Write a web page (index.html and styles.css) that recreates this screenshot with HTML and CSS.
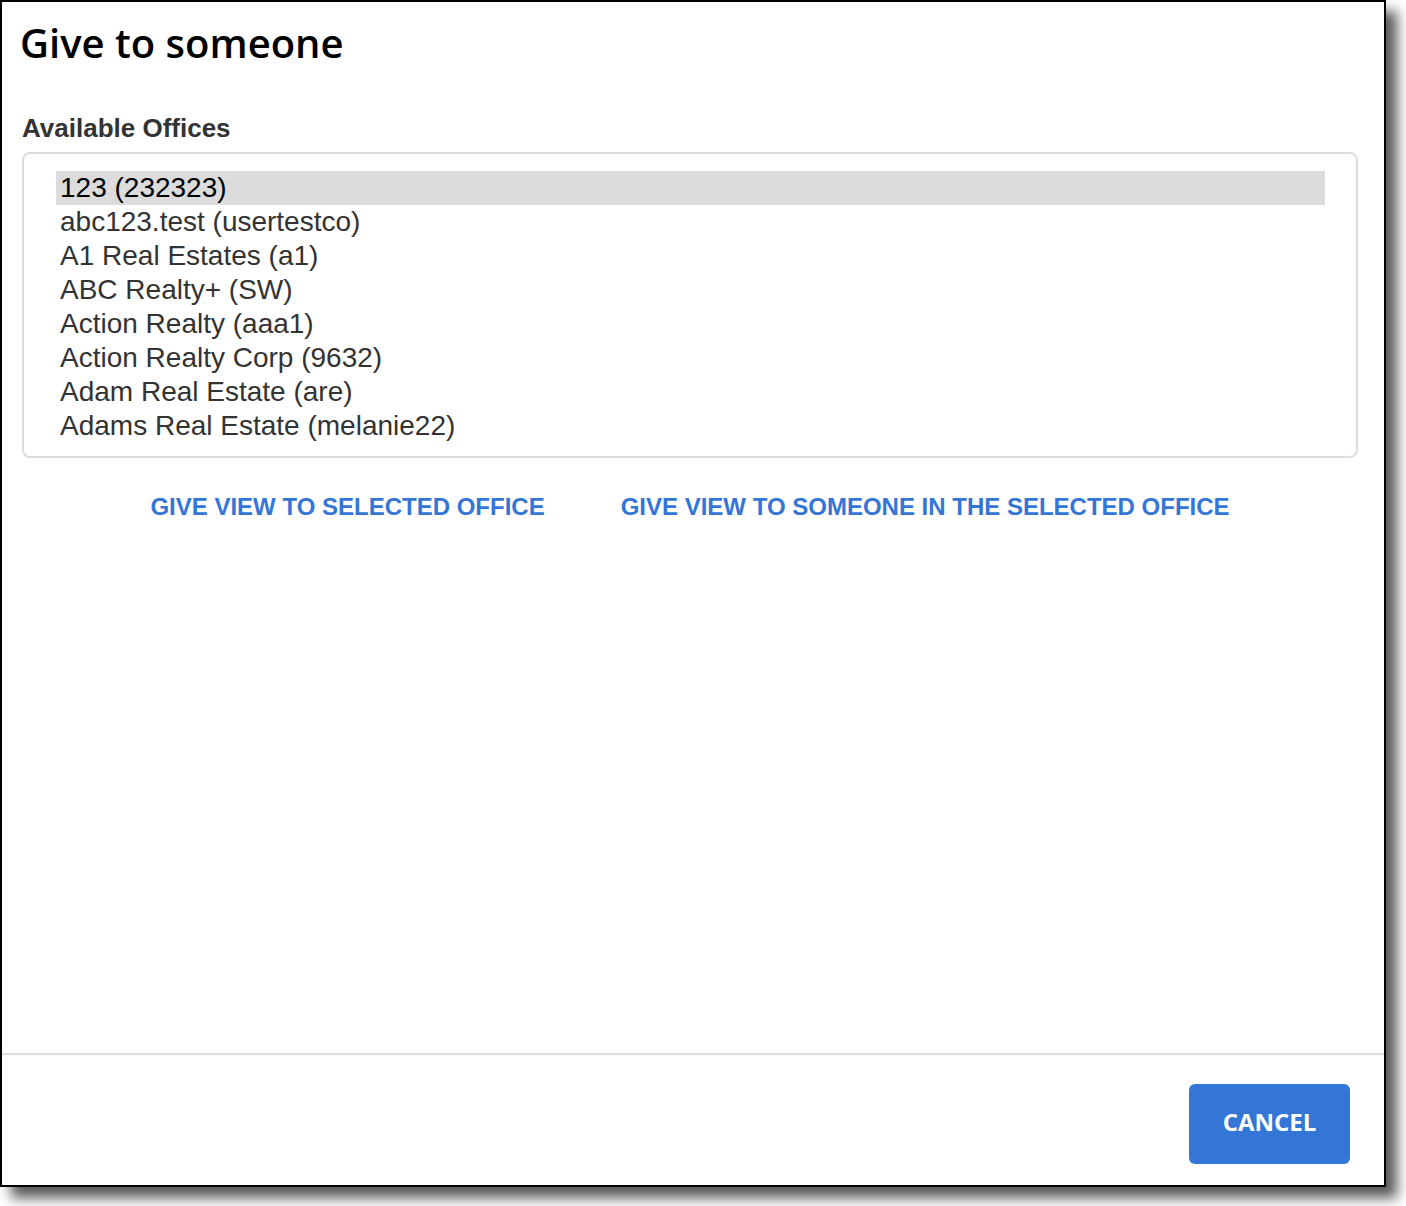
FILE: index.html
```html
<!DOCTYPE html>
<html lang="en">
<head>
    <meta charset="UTF-8">
    <meta name="viewport" content="width=device-width, initial-scale=1.0">
    <title>Give to someone</title>
    <link rel="stylesheet" href="styles.css">
</head>
<body>
    <div class="dialog">
        <div class="dialog-body">
            <h1 class="dialog-title">Give to someone</h1>

            <label class="field-label">Available Offices</label>
            <div class="office-list">
                <div class="office selected">123 (232323)</div>
                <div class="office">abc123.test (usertestco)</div>
                <div class="office">A1 Real Estates (a1)</div>
                <div class="office">ABC Realty+ (SW)</div>
                <div class="office">Action Realty (aaa1)</div>
                <div class="office">Action Realty Corp (9632)</div>
                <div class="office">Adam Real Estate (are)</div>
                <div class="office">Adams Real Estate (melanie22)</div>
            </div>

            <div class="actions">
                <a href="#" class="link-action">Give view to selected office</a>
                <a href="#" class="link-action">Give view to someone in the selected office</a>
            </div>
        </div>

        <div class="dialog-footer">
            <button class="btn-primary">Cancel</button>
        </div>
    </div>
</body>
</html>
```

FILE: styles.css
```css
:root {
    --primary-color: #3476d6;
    --border-color: #dddddd;
    --text-color: #333333;
}

* {
    margin: 0;
    padding: 0;
    box-sizing: border-box;
}

body {
    background-color: white;
    font-family: 'Liberation Sans', Arial, sans-serif;
    color: var(--text-color);
    padding-bottom: 19px;
}

.dialog {
    width: 1386px;
    height: 1187px;
    border: 2px solid black;
    background-color: white;
    box-shadow: 11px 11px 12px rgba(0,0,0,0.65);
    display: flex;
    flex-direction: column;
}

.dialog-body {
    flex: 1;
    padding: 0 26px 0 20px;
}

.dialog-title {
    font-family: 'Open Sans', sans-serif;
    font-weight: 600;
    font-size: 40px;
    line-height: 52px;
    color: black;
    margin: 15px 0 0 -2px;
}

.field-label {
    display: block;
    font-size: 26px;
    font-weight: bold;
    line-height: 30px;
    margin: 44px 0 9px 0;
}

.office-list {
    border: 2px solid var(--border-color);
    border-radius: 8px;
    padding: 17px 31px 13px 32px;
}

.office {
    font-size: 28px;
    line-height: 34px;
    padding-left: 4px;
}

.office.selected {
    background-color: #dcdcdc;
    color: black;
}

.actions {
    display: flex;
    justify-content: center;
    gap: 76px;
    margin-top: 34px;
}

.link-action {
    font-size: 24px;
    font-weight: bold;
    line-height: 30px;
    text-transform: uppercase;
    text-decoration: none;
    color: var(--primary-color);
}

.dialog-footer {
    border-top: 2px solid var(--border-color);
    display: flex;
    justify-content: flex-end;
    padding: 29px 34px 21px;
}

.btn-primary {
    width: 161px;
    height: 80px;
    padding-bottom: 6px;
    border: none;
    border-radius: 6px;
    background-color: var(--primary-color);
    color: white;
    font-family: 'Open Sans', sans-serif;
    font-weight: bold;
    font-size: 24px;
    text-transform: uppercase;
    cursor: pointer;
}
```
